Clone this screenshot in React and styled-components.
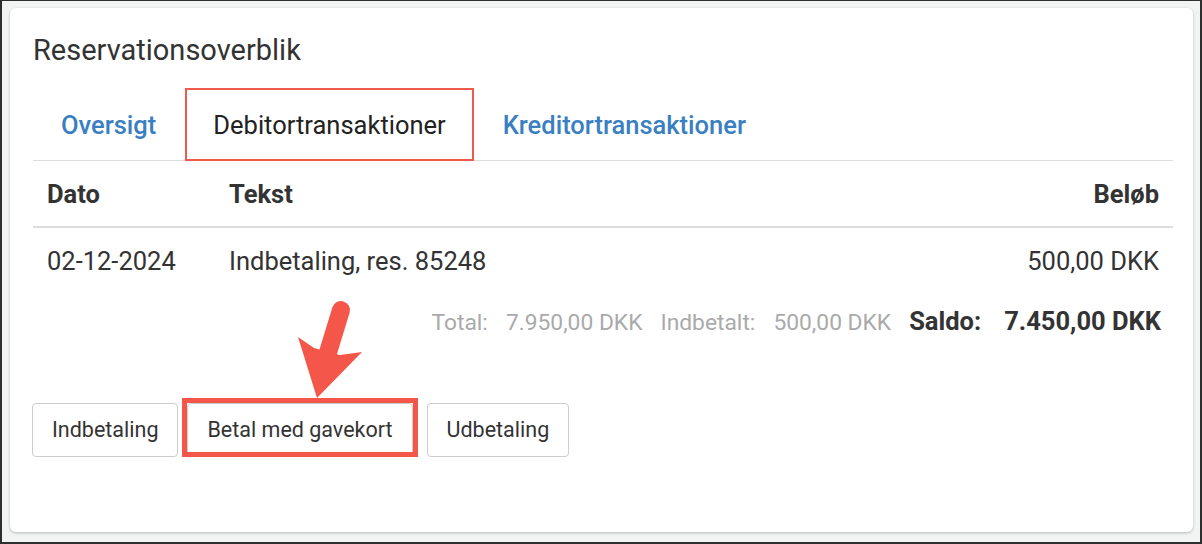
import styled, { createGlobalStyle } from "styled-components";

const GlobalStyle = createGlobalStyle`
  html, body {
    margin: 0;
    padding: 0;
    background: #2e2e2e;
  }
  body {
    font-family: Roboto, "Liberation Sans", Arial, sans-serif;
    color: #333;
  }
`;

const tabs = [
  { label: "Oversigt", active: false },
  { label: "Debitortransaktioner", active: true },
  { label: "Kreditortransaktioner", active: false },
];

const transactions = [
  { date: "02-12-2024", text: "Indbetaling, res. 85248", amount: "500,00 DKK" },
];

export default function App() {
  return (
    <>
      <GlobalStyle />
      <Frame>
        <Card>
          <Title>Reservationsoverblik</Title>
          <TabBar>
            {tabs.map((t) => (
              <Tab key={t.label} active={t.active}>
                {t.label}
              </Tab>
            ))}
          </TabBar>
          <Table>
            <thead>
              <tr>
                <Th width="154px">Dato</Th>
                <Th>Tekst</Th>
                <Th align="right">Beløb</Th>
              </tr>
            </thead>
            <tbody>
              {transactions.map((row) => (
                <tr key={row.date + row.text}>
                  <Td>{row.date}</Td>
                  <Td>{row.text}</Td>
                  <Td align="right">{row.amount}</Td>
                </tr>
              ))}
            </tbody>
          </Table>
          <Summary>
            <Muted>Total:</Muted>
            <Muted>7.950,00 DKK</Muted>
            <Muted>Indbetalt:</Muted>
            <Muted>500,00 DKK</Muted>
            <Strong>Saldo:</Strong>
            <Strong>7.450,00 DKK</Strong>
          </Summary>
          <ButtonRow>
            <Button>Indbetaling</Button>
            <Highlighted>
              <Button>Betal med gavekort</Button>
              <HighlightBox />
            </Highlighted>
            <Button>Udbetaling</Button>
          </ButtonRow>
          <Arrow viewBox="0 0 80 110" width="80" height="110">
            <line
              x1="56"
              y1="15"
              x2="41"
              y2="64"
              stroke="#f4574a"
              strokeWidth="18"
              strokeLinecap="round"
            />
            <polygon
              points="13,42 29,53 47,58 55,60 77,57 32,103"
              fill="#f4574a"
            />
          </Arrow>
        </Card>
      </Frame>
    </>
  );
}

const Frame = styled.div`
  box-sizing: border-box;
  width: 1202px;
  height: 544px;
  border: 2px solid #2e2e2e;
  border-top-width: 1px;
  background: #f2f4f4;
  padding: 7px 8px 0 8px;
`;

const Card = styled.div`
  position: relative;
  box-sizing: border-box;
  width: 1183px;
  height: 524px;
  background: #fff;
  border-radius: 6px;
  box-shadow: 0 1px 3px rgba(0, 0, 0, 0.25);
  padding: 26px 20px 0 23px;
`;

const Title = styled.h2`
  margin: 0 0 21px;
  font-size: 29px;
  line-height: 33px;
  font-weight: 400;
  color: #333;
`;

const TabBar = styled.div`
  display: flex;
  gap: 1px;
  border-bottom: 1px solid #ddd;
`;

const Tab = styled.div`
  padding: 20px 26px 19px;
  font-size: 25.5px;
  line-height: 30px;
  color: ${(p) => (p.active ? "#222" : "#3a7fc1")};
  border: 2px solid ${(p) => (p.active ? "#ef5a4c" : "transparent")};
  margin-bottom: -1px;
  font-weight: ${(p) => (p.active ? 400 : 500)};
`;

const Table = styled.table`
  width: 100%;
  border-collapse: collapse;
  font-size: 25.5px;
  line-height: 30px;
`;

const Th = styled.th`
  text-align: ${(p) => p.align || "left"};
  width: ${(p) => p.width || "auto"};
  padding: 18px 14px 17px;
  font-weight: 700;
  color: #333;
  border-bottom: 2px solid #ddd;
`;

const Td = styled.td`
  text-align: ${(p) => p.align || "left"};
  padding: 18px 14px 18px;
  color: #333;
`;

const Summary = styled.div`
  display: flex;
  justify-content: flex-end;
  align-items: baseline;
  gap: 18px;
  padding: 12px 12px 0 0;
  line-height: 30px;
`;

const Muted = styled.span`
  font-size: 22.8px;
  color: #aaa;
`;

const Strong = styled.span`
  font-size: 25.5px;
  font-weight: 700;
  color: #333;
  & + & {
    margin-left: 5px;
  }
`;

const ButtonRow = styled.div`
  display: flex;
  align-items: flex-start;
  gap: 8px;
  margin-top: 65px;
  margin-left: -1px;
`;

const Button = styled.button`
  font-family: Roboto, "Liberation Sans", Arial, sans-serif;
  font-size: 21.5px;
  line-height: 24px;
  padding: 14px 19px;
  color: #333;
  background: #fff;
  border: 1px solid #ccc;
  border-radius: 4px;
`;

const Highlighted = styled.div`
  position: relative;
  display: flex;
  margin: 0 6px 0 1px;
`;

const HighlightBox = styled.div`
  position: absolute;
  left: -5px;
  right: -5px;
  top: -5px;
  bottom: 0;
  border: 5px solid #f4574a;
  pointer-events: none;
`;

const Arrow = styled.svg`
  position: absolute;
  left: 275px;
  top: 287px;
`;
